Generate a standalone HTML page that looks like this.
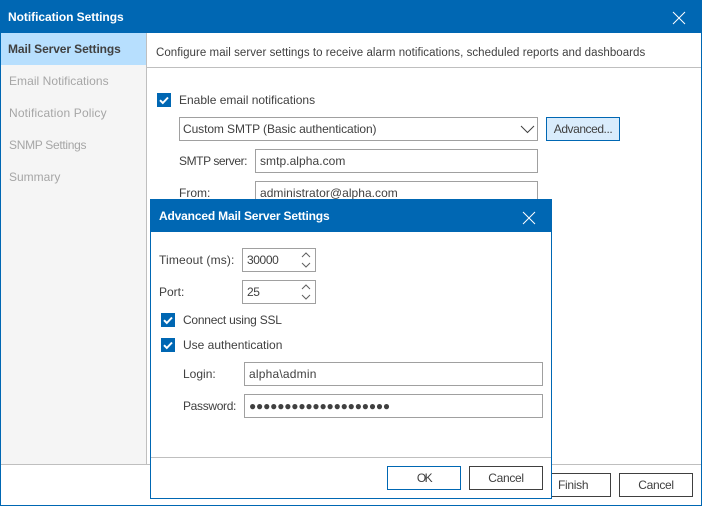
<!DOCTYPE html>
<html><head><meta charset="utf-8"><style>
html,body{margin:0;padding:0;background:#fff}
#p{position:relative;width:702px;height:506px;overflow:hidden;background:#fff;font-family:"Liberation Sans",sans-serif;font-size:12px;color:#404040}
#p div{position:absolute;box-sizing:border-box}
.t{white-space:nowrap;line-height:16px;height:16px}
.box{border:1px solid #a0a0a0;background:#fff}
.g{color:#a6a6a6}
.btn{border:1px solid #404040;background:#fff;text-align:center;line-height:22px}
.cb{width:14px;height:14px;background:#0067b3}
svg{position:absolute;display:block}
</style></head><body><div id="p">
<div style="left:0;top:0;width:702px;height:506px;border:1px solid #0067b3"></div>
<div style="left:0;top:0;width:702px;height:33px;background:#0067b3"></div>
<div class="t" style="left:8px;top:9px;color:#fff;font-weight:bold;letter-spacing:-.05px">Notification Settings</div>
<svg style="left:672px;top:11px" width="14" height="14" viewBox="0 0 14 14"><path d="M1 1L13 13M13 1L1 13" stroke="#fff" stroke-width="1" fill="none"/></svg>

<div style="left:1px;top:33px;width:146px;height:431px;background:#f5f5f5;border-right:1px solid #bfbfbf"></div>
<div style="left:1px;top:33px;width:145px;height:32px;background:#b7dffe"></div>
<div class="t" style="left:8px;top:41px;font-weight:bold;letter-spacing:-.1px">Mail Server Settings</div>
<div class="t g" style="left:9px;top:73px;letter-spacing:.05px">Email Notifications</div>
<div class="t g" style="left:9px;top:105px;letter-spacing:.16px">Notification Policy</div>
<div class="t g" style="left:9px;top:137px;letter-spacing:-.3px">SNMP Settings</div>
<div class="t g" style="left:9px;top:169px">Summary</div>

<div class="t" style="left:156px;top:45px;font-size:11.5px;letter-spacing:.05px">Configure mail server settings to receive alarm notifications, scheduled reports and dashboards</div>
<div style="left:147px;top:67px;width:554px;height:1px;background:#bfbfbf"></div>

<div class="cb" style="left:157px;top:93px"></div>
<svg style="left:157px;top:93px" width="14" height="14" viewBox="0 0 14 14"><path d="M3 7.2L5.8 10L11 4.5" stroke="#fff" stroke-width="2" fill="none"/></svg>
<div class="t" style="left:179px;top:92px">Enable email notifications</div>

<div class="box" style="left:179px;top:117px;width:359px;height:24px"></div>
<div class="t" style="left:183px;top:121px;letter-spacing:-.09px">Custom SMTP (Basic authentication)</div>
<svg style="left:520px;top:125px" width="16" height="9" viewBox="0 0 16 9"><path d="M1 1L7.5 7.5L14 1" stroke="#404040" stroke-width="1" fill="none"/></svg>
<div class="btn" style="left:546px;top:117px;width:74px;height:24px;border-color:#0067b3;background:#d9ecfc;letter-spacing:-.45px">Advanced...</div>

<div class="t" style="left:179px;top:153px;letter-spacing:-.42px">SMTP server:</div>
<div class="box" style="left:255px;top:149px;width:283px;height:24px"></div>
<div class="t" style="left:260px;top:153px;letter-spacing:.05px">smtp.alpha.com</div>
<div class="t" style="left:179px;top:185px">From:</div>
<div class="box" style="left:255px;top:181px;width:283px;height:24px"></div>
<div class="t" style="left:260px;top:185px;letter-spacing:.04px">administrator@alpha.com</div>

<div style="left:1px;top:464px;width:700px;height:1px;background:#bfbfbf"></div>
<div class="btn" style="left:540px;top:473px;width:71px;height:24px"></div>
<div class="t" style="left:558px;top:477px;letter-spacing:-.3px">Finish</div>
<div class="btn" style="left:619px;top:473px;width:74px;height:24px;letter-spacing:-.3px">Cancel</div>

<div style="left:150px;top:199px;width:402px;height:300px;background:#fff;border:1px solid #0067b3"></div>
<div style="left:150px;top:199px;width:402px;height:33px;background:#0067b3"></div>
<div class="t" style="left:159px;top:208px;color:#fff;font-weight:bold;letter-spacing:-.17px">Advanced Mail Server Settings</div>
<svg style="left:522px;top:211px" width="14" height="14" viewBox="0 0 14 14"><path d="M1 1L13 13M13 1L1 13" stroke="#fff" stroke-width="1" fill="none"/></svg>

<div class="t" style="left:159px;top:252px;letter-spacing:.15px">Timeout (ms):</div>
<div class="box" style="left:242px;top:248px;width:74px;height:24px"></div>
<div class="t" style="left:247px;top:252px;letter-spacing:-.4px">30000</div>
<svg style="left:300px;top:251px" width="12" height="18" viewBox="0 0 12 18"><path d="M2 6L6 2L10 6M2 12L6 16L10 12" stroke="#606060" stroke-width="1" fill="none"/></svg>
<div class="t" style="left:159px;top:284px">Port:</div>
<div class="box" style="left:242px;top:280px;width:74px;height:24px"></div>
<div class="t" style="left:247px;top:284px;letter-spacing:-.4px">25</div>
<svg style="left:300px;top:283px" width="12" height="18" viewBox="0 0 12 18"><path d="M2 6L6 2L10 6M2 12L6 16L10 12" stroke="#606060" stroke-width="1" fill="none"/></svg>

<div class="cb" style="left:161px;top:313px"></div>
<svg style="left:161px;top:313px" width="14" height="14" viewBox="0 0 14 14"><path d="M3 7.2L5.8 10L11 4.5" stroke="#fff" stroke-width="2" fill="none"/></svg>
<div class="t" style="left:183px;top:312px;letter-spacing:-.24px">Connect using SSL</div>
<div class="cb" style="left:161px;top:338px"></div>
<svg style="left:161px;top:338px" width="14" height="14" viewBox="0 0 14 14"><path d="M3 7.2L5.8 10L11 4.5" stroke="#fff" stroke-width="2" fill="none"/></svg>
<div class="t" style="left:183px;top:337px">Use authentication</div>

<div class="t" style="left:183px;top:366px">Login:</div>
<div class="box" style="left:244px;top:362px;width:299px;height:24px"></div>
<div class="t" style="left:249px;top:366px;letter-spacing:.2px">alpha\admin</div>
<div class="t" style="left:183px;top:398px;letter-spacing:-.33px">Password:</div>
<div class="box" style="left:244px;top:394px;width:299px;height:24px"></div>
<div class="t" style="left:249px;top:398px;letter-spacing:-.2px">●●●●●●●●●●●●●●●●●●●●</div>

<div style="left:151px;top:457px;width:400px;height:1px;background:#bfbfbf"></div>
<div class="btn" style="left:387px;top:466px;width:74px;height:24px;border-color:#0067b3;letter-spacing:-1.5px">OK</div>
<div class="btn" style="left:469px;top:466px;width:74px;height:24px;letter-spacing:-.3px">Cancel</div>
</div></body></html>
